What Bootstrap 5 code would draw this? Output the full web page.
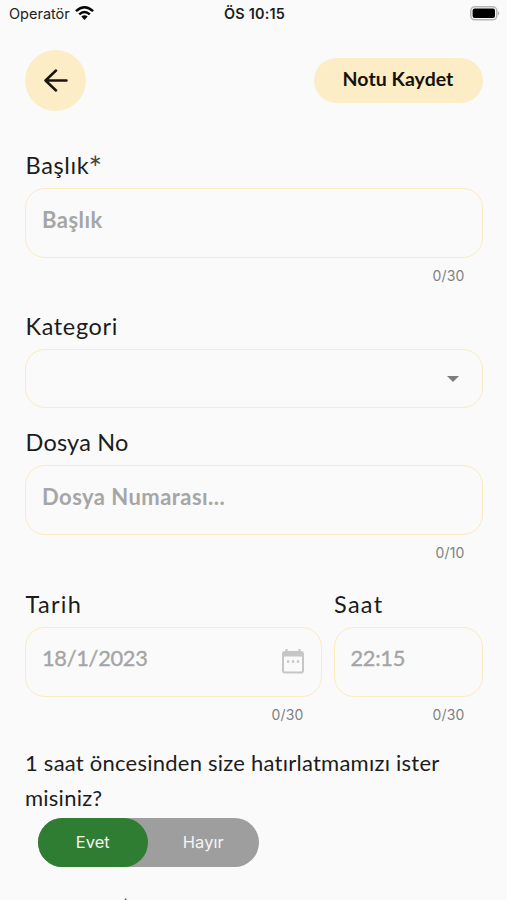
<!DOCTYPE html>
<html lang="tr">
<head>
<meta charset="utf-8">
<meta name="viewport" content="width=device-width, initial-scale=1">
<title>Not Ekle</title>
<link href="https://cdn.jsdelivr.net/npm/bootstrap@5.3.0/dist/css/bootstrap.min.css" rel="stylesheet">
<style>
html,body{height:900px;overflow:hidden}
body{background:#fafafa;color:#1c1c1c;font-family:Lato,"Open Sans",sans-serif}
.status-bar{height:28px;font:14.5px/28px Inter,sans-serif;color:#222;padding:0 7px 0 9px}
.status-bar>div{flex:1 1 0}
.status-bar svg{margin-top:-2px}
.status-bar .status-time{flex:none;font-size:14.4px;font-weight:600;color:#1c1c1c;letter-spacing:.2px}
.top-actions{height:61px;margin:22px 0 37px}
.back-btn{width:61px;height:61px;background:#fcedc7}
.save-btn{width:169px;height:45px;background:#fcedc7;color:#16120a;font-weight:700;font-size:19.5px;letter-spacing:.05px;line-height:1}
.save-btn span{display:block;margin-top:-3px}
.screen-body{padding:0 24.5px 0 25px}
.field-label{height:35px;line-height:35px;font-size:23.5px;margin:0 0 5px;padding-left:.5px;display:block;white-space:nowrap;letter-spacing:.65px}
.field-label.tight{letter-spacing:.2px}
.field-label.wide{letter-spacing:1.3px}
.field-label .star{font-size:32px;line-height:20px;vertical-align:-6px;letter-spacing:0;margin-left:-1px;color:#444}
.category-field{padding-top:15px}
.file-field{padding-top:17px}
.field-box{border:1.5px solid #fdebc0;border-radius:20px;height:70px;padding:0 16px 7px;background:transparent;color:#a6a6a6;font-size:22px;font-weight:700;letter-spacing:.45px}
.select-box{height:59px;padding-bottom:0}
.digits{font-weight:400;font-size:21.8px;letter-spacing:-.3px;-webkit-text-stroke:.35px #a2a2a2}
.counter{height:36px;line-height:35px;font-family:Inter,sans-serif;font-size:14px;color:#818181;padding-right:18px;text-align:right;letter-spacing:.15px}
.time-col{width:149px}
.question{font-size:22px;line-height:35px;margin:12px 0 3px;letter-spacing:.24px}
.switch-track{width:221px;height:49px;background:#9e9e9e;margin-left:12.5px;font-family:Inter,sans-serif;font-size:16.5px;color:#f5f5f5}
.switch-on{background:#2e7d32}
.note-label{margin-top:24px}
</style>
<script src="https://cdn.jsdelivr.net/npm/bootstrap@5.3.0/dist/js/bootstrap.bundle.min.js"></script>
</head>
<body>
<header class="status-bar d-flex align-items-center">
  <div class="d-flex align-items-center"><span>Operatör</span>
    <svg class="ms-1" width="21" height="16" viewBox="0 0 21 16"><g fill="none" stroke="#050505" stroke-width="2.5"><path d="M1.900 6.200Q10.500-1.800 19.100 6.200"/><path d="M5.200 9.400Q10.500 4.500 15.800 9.400"/></g><path d="M7.300 11.600Q10.500 9 13.700 11.600L10.500 15Z" fill="#050505"/></svg></div>
  <div class="status-time text-center">ÖS 10:15</div>
  <div class="d-flex justify-content-end"><svg width="30" height="15" viewBox="0 0 30 15"><rect x=".8" y=".8" width="26" height="13" rx="4" fill="#fafafa" stroke="#b5b5b5" stroke-width="1.500"/><rect x="2.600" y="2.600" width="22.400" height="9.400" rx="2" fill="#000"/><path d="M28 5Q30.500 7.300 28 9.600Z" fill="#b5b5b5"/></svg></div>
</header>
<main class="screen-body">
  <div class="top-actions d-flex justify-content-between align-items-center">
    <button class="back-btn btn border-0 rounded-circle p-0 d-flex align-items-center justify-content-center" aria-label="Geri"><svg width="24" height="24" viewBox="0 0 24 24" fill="none" stroke="#1b160d" stroke-width="2.500" stroke-linecap="round" stroke-linejoin="round"><path d="M22.500 11.500H1.500M12 1.500L1.500 11.500L12 21.500"/></svg></button>
    <button class="save-btn btn border-0 rounded-pill p-0"><span>Notu Kaydet</span></button>
  </div>
  <section>
    <label class="field-label">Başlık<span class="star">*</span></label>
    <div class="field-box d-flex align-items-center">Başlık</div>
    <div class="counter">0/30</div>
  </section>
  <section class="category-field">
    <label class="field-label">Kategori</label>
    <div class="field-box select-box d-flex align-items-center justify-content-end"><svg class="me-1" width="18" height="8" viewBox="0 0 18 8"><path d="M3 1H15L9 7Z" fill="#7d7d7d"/></svg></div>
  </section>
  <section class="file-field">
    <label class="field-label tight">Dosya No</label>
    <div class="field-box d-flex align-items-center">Dosya Numarası...</div>
    <div class="counter">0/10</div>
  </section>
  <div class="d-flex pt-3">
    <section class="flex-grow-1 me-2 pe-1">
      <label class="field-label wide">Tarih</label>
      <div class="field-box digits d-flex align-items-center justify-content-between"><span>18/1/2023</span><svg class="mt-1" width="24" height="27" viewBox="0 0 24 27"><path d="M5.500 2V6M18.500 2V6" stroke="#c6c6c6" stroke-width="2.200"/><rect x="2" y="5" width="20" height="20.500" rx="2" fill="none" stroke="#c6c6c6" stroke-width="2"/><path d="M2 5H22V9.500H2Z" fill="#c6c6c6"/><path d="M6 14.500h2.300M10.900 14.500h2.300M15.800 14.500h2.300" stroke="#c6c6c6" stroke-width="2.300"/></svg></div>
      <div class="counter">0/30</div>
    </section>
    <section class="time-col">
      <label class="field-label wide">Saat</label>
      <div class="field-box digits d-flex align-items-center">22:15</div>
      <div class="counter">0/30</div>
    </section>
  </div>
  <p class="question">1 saat öncesinden size hatırlatmamızı ister misiniz?</p>
  <div class="switch-track rounded-pill d-flex">
    <div class="switch-on w-50 rounded-pill d-flex align-items-center justify-content-center">Evet</div>
    <div class="w-50 d-flex align-items-center justify-content-center">Hayır</div>
  </div>
  <label class="field-label tight note-label">Açıklama<span class="star">*</span></label>
</main>
</body>
</html>
